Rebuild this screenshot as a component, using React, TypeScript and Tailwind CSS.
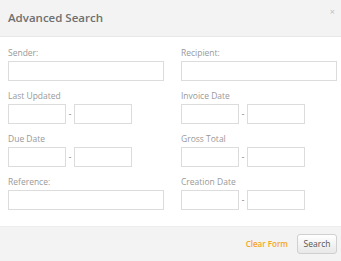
import React from "react";

const font = { fontFamily: '"Open Sans", "Noto Sans", sans-serif' };

const Field: React.FC<{ label: string }> = ({ label }) => (
  <div className="flex flex-col">
    <label className="text-[8.5px] leading-[12px] text-[#999] mb-[2px]">{label}</label>
    <input className="h-[20px] w-[156px] border border-[#dcdcdc] bg-white outline-none" />
  </div>
);

const RangeField: React.FC<{ label: string }> = ({ label }) => (
  <div className="flex flex-col">
    <label className="text-[8.5px] leading-[12px] text-[#999] mb-[2px]">{label}</label>
    <div className="flex items-center">
      <input className="h-[20px] w-[58px] border border-[#dcdcdc] bg-white outline-none" />
      <span className="w-[8px] text-center text-[8px] font-semibold text-[#999]">-</span>
      <input className="h-[20px] w-[58px] border border-[#dcdcdc] bg-white outline-none" />
    </div>
  </div>
);

export default function App() {
  return (
    <div className="w-[341px] h-[261px] bg-white flex flex-col" style={font}>
      {/* Header */}
      <div className="h-[37px] bg-[#f3f3f3] border-b border-[#e8e8e8] flex items-start justify-between pl-[8px] pr-[6px]">
        <h2 className="mt-[9px] text-[11.5px] font-semibold text-[#6f6f6f]">Advanced Search</h2>
        <span className="mt-[7px] text-[9px] text-[#c0c0c0] leading-none">×</span>
      </div>

      {/* Body */}
      <div className="flex-1 grid grid-cols-[173px_1fr] content-start gap-y-[9px] px-[8px] pt-[10px]">
        <Field label="Sender:" />
        <Field label="Recipient:" />
        <RangeField label="Last Updated" />
        <RangeField label="Invoice Date" />
        <RangeField label="Due Date" />
        <RangeField label="Gross Total" />
        <Field label="Reference:" />
        <RangeField label="Creation Date" />
      </div>

      {/* Footer */}
      <div className="h-[35px] bg-[#f3f3f3] border-t border-[#ececec] flex items-center justify-end gap-[9px] pr-[4px]">
        <button className="text-[8px] font-semibold text-[#f5a623]">Clear Form</button>
        <button className="h-[20px] w-[40px] text-[8.5px] text-[#555] border border-[#d0d0d0] rounded-[3px] bg-gradient-to-b from-white to-[#e8e8e8]">
          Search
        </button>
      </div>
    </div>
  );
}
